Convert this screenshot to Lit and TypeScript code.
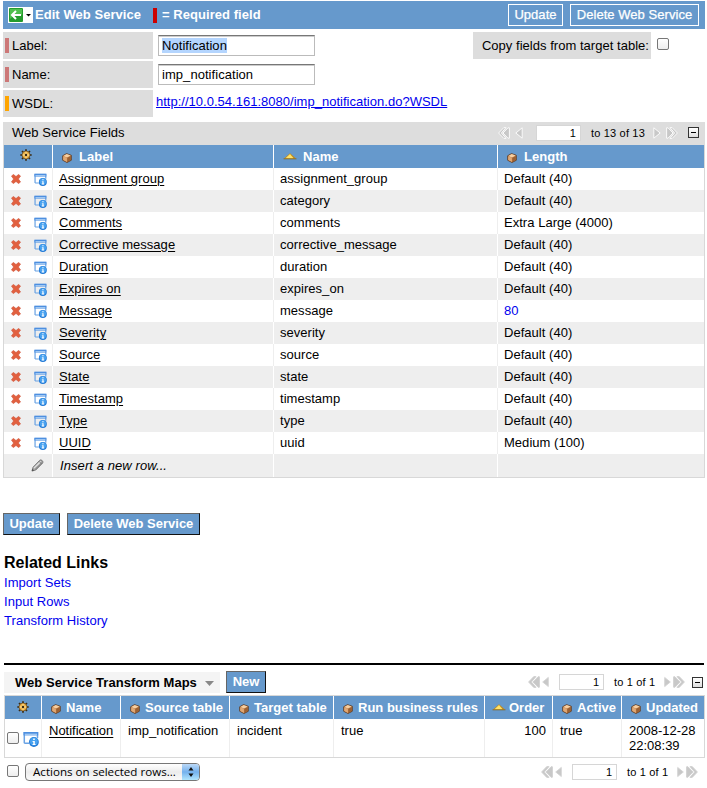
import { LitElement, html, css } from "lit";
import { customElement, property } from "lit/decorators.js";

const base = css`
  * { box-sizing: border-box; }
  :host { display: block; font: 13px/16px "Liberation Sans", Arial, sans-serif; color: #000; }
  svg { display: block; flex: none; }
`;

const cube = html`<svg class="cube" width="10" height="10" viewBox="0 0 11 11">
  <path d="M.8 3 5 .7 10.2 2.5V8L5.5 10.4 .8 8Z" fill="#b97a43" stroke="#5a3418" stroke-width=".9"/>
  <path d="M1.3 3.2 5.2 1.1 9.6 2.8 5.6 4.9Z" fill="#f6cfa2"/>
  <path d="M1.3 3.6 5.4 5.2V9.9L1.3 7.8Z" fill="#e0a874"/>
  <path d="M5.9 5.2 9.7 3.5V7.8L5.9 9.9Z" fill="#9a6033"/></svg>`;

const sortUp = html`<svg class="sort" width="14" height="7" viewBox="0 0 14 7">
  <path d="M.5 6 7 .3 13.5 6Z" fill="#c08a1c"/><path d="M2.5 5.2 7 1 10.5 5.2Z" fill="#ffe36a"/><path d="M.5 5.5H13.5V6.3H.5Z" fill="#7d6a35"/></svg>`;

const gear = html`<svg class="gear" width="12" height="12" viewBox="0 0 12 12">
  <path d="M6 .3V11.7M.3 6H11.7M2 2 10 10M10 2 2 10" stroke="#3a2a12" stroke-width="1.7"/>
  <circle cx="6" cy="6" r="3.9" fill="#f0b548" stroke="#5a3c14" stroke-width=".7"/>
  <path d="M6 2.6V9.4M2.6 6H9.4" stroke="#fde29a" stroke-width="1"/>
  <circle cx="6" cy="6" r="1.2" fill="#3a2a12"/></svg>`;

const cross = html`<svg class="cross" width="10" height="10" viewBox="0 0 10 10">
  <path d="M.5 2 2.5.5 5 2.6 7.5.5 9.5 2 7.4 5 9.5 8 7.5 9.5 5 7.4 2.5 9.5.5 8 2.6 5Z" fill="#e2603f" stroke="#d15a40" stroke-width=".7"/></svg>`;

const info = (s: number) => html`<svg width=${s} height=${s} viewBox="0 0 16 16">
  <path d="M1.3 12.3V1.8H14.5V7M1.3 12.3H6" fill="none" stroke="#6ba3e4" stroke-width="1.5"/>
  <path d="M.5 1H15.2V4.4H.5Z" fill="#4d8fe0"/><path d="M1.8 2.7H14V3.8H1.8Z" fill="#b5d6f8"/>
  <circle cx="10.9" cy="11" r="4.9" fill="#1f78d6"/><circle cx="10.9" cy="10.5" r="3.9" fill="#48a2f0"/>
  <path d="M10.2 7.6H11.8V9H10.2ZM9.6 10H11.8V13H12.5V14H9.5V13H10.3V10.9H9.6Z" fill="#fff"/></svg>`;

const pencil = html`<svg width="13" height="13" viewBox="0 0 13 13">
  <path d="M1 12 2 8.2 8.6 1.4Q9.8.2 11.2 1.6 12.7 3 11.6 4.2L4.8 11Z" fill="#aaa" stroke="#777" stroke-width=".9"/>
  <path d="M3 9.2 9.8 2.5" stroke="#e4e4e4" stroke-width="1.1"/><path d="M4.4 10.2 11 3.7M8 2.3 10.7 5" stroke="#777" stroke-width=".9"/><path d="M.7 12.3 1.4 9.8 3.2 11.6Z" fill="#555"/></svg>`;

@customElement("page-control")
class PageControl extends LitElement {
  @property() range = "";
  @property({ type: Boolean, reflect: true }) light = false;
  @property({ type: Boolean }) collapse = false;
  static styles = [base, css`
    :host { display: flex; align-items: center; height: 18px; font-size: 11px; line-height: 14px; }
    .arrows { display: flex; gap: 5px; --fill: #c8c8c8; --edge: #fafafa; }
    :host([light]) .arrows { gap: 2px; --fill: #c8c8c8; --edge: #d2d2d2; }
    .arrows path { fill: var(--fill); stroke: var(--edge); stroke-width: 1; }
    .flip { transform: scaleX(-1); }
    .num { width: 45px; height: 16px; border: 1px solid #d6d6d6; background: #fff; text-align: right; padding-right: 4px; margin: 0 10px 0 13px; }
    :host([light]) .num { margin-left: 10px; }
    .range { width: 54px; margin-right: 8px; white-space: nowrap; letter-spacing: .18px; }
    :host([light]) .range { width: 42px; }
    .box { width: 11px; height: 11px; border: 1px solid #333; background: linear-gradient(#fff, #ddd); margin-left: 10px; display: grid; place-items: center; }
    :host([light]) .box { margin-left: 7px; }
    .dash { width: 5px; height: 1px; background: #000; }
  `];
  render() {
    const one = (c: string) => html`<svg class=${c} width=${this.light ? 7 : 8} height="12" viewBox="0 0 8 12"><path d="M.8 .8 7.2 6 .8 11.2Z"/></svg>`;
    const two = (c: string) => html`<svg class=${c} width="12" height="12" viewBox="0 0 12 12"><path d="M4 .6H6.2L11.4 6 6.2 11.4H4L8.6 6Z"/><path d="M.6 .8H2L7 6 2 11.2H.6Z"/></svg>`;
    return html`<div class="arrows">${two("flip")}${one("flip")}</div>
      <div class="num">1</div><div class="range">${this.range}</div>
      <div class="arrows">${one("")}${two("")}</div>
      ${this.collapse ? html`<div class="box"><div class="dash"></div></div>` : ""}`;
  }
}

const fields: [string, string, string][] = [
  ["Assignment group", "assignment_group", "Default (40)"],
  ["Category", "category", "Default (40)"],
  ["Comments", "comments", "Extra Large (4000)"],
  ["Corrective message", "corrective_message", "Default (40)"],
  ["Duration", "duration", "Default (40)"],
  ["Expires on", "expires_on", "Default (40)"],
  ["Message", "message", "80"],
  ["Severity", "severity", "Default (40)"],
  ["Source", "source", "Default (40)"],
  ["State", "state", "Default (40)"],
  ["Timestamp", "timestamp", "Default (40)"],
  ["Type", "type", "Default (40)"],
  ["UUID", "uuid", "Medium (100)"],
];

@customElement("app-root")
class AppRoot extends LitElement {
  static styles = [base, css`
    :host { height: 788px; background: #fff; padding: 1px 2px 0 3px; overflow: hidden; white-space: nowrap; }
    .bar { height: 28px; background: #69c; color: #fff; font-weight: bold; display: flex; align-items: center; padding: 0 6px 0 5px; letter-spacing: .05px; }
    .back { width: 25px; height: 16px; background: #fff; margin-right: 2px; }
    .req { width: 4px; height: 15px; background: #c00; margin: 0 5px 0 12px; }
    .title { width: 106px; }
    .btn { height: 22px; border: 1px solid #fff; font-weight: normal; display: grid; place-items: center; letter-spacing: .05px; -webkit-text-stroke: .25px #fff; }
    .first { width: 55px; margin-left: auto; margin-right: 7px; }
    .second { width: 129px; }
    .form { display: grid; grid-template-columns: 150px 1fr 178px 54px; grid-auto-rows: 27px; row-gap: 2px; margin-top: 3px; }
    .lab { background: #ddd; display: flex; align-items: center; padding-left: 2px; }
    .mark { width: 4px; height: 15px; background: #c77; margin-right: 3px; }
    .warn { background: orange; }
    .field { padding: 3px 0 0 5px; }
    .input { width: 157px; height: 21px; border: 1px solid #bbb; border-top: 1px solid #777; box-shadow: inset 0 1px #ccc; padding: 2px 3px; letter-spacing: .05px; }
    .sel { background: #b4d5fe; }
    .wsdl { color: #00e; text-decoration: underline; padding: 4px 0 0 3px; letter-spacing: .015px; }
    .copy { background: #ddd; display: flex; align-items: center; justify-content: flex-end; padding-right: 2px; letter-spacing: .03px; }
    .check { width: 12px; height: 12px; border: 1px solid #777; border-radius: 2px; background: linear-gradient(#fff, #eee); flex: none; }
    .form .check { margin: 6px 0 0 6px; }
    .list { width: 702px; margin-top: 5px; border: 1px solid #d8d8d8; border-width: 0 1px 1px; }
    .caption { height: 23px; background: #ddd; margin: 0 -1px; padding: 0 0 2px 9px; display: flex; align-items: center; letter-spacing: .05px; }
    .caption page-control { margin-left: auto; margin-right: 6px; }
    .row { display: grid; grid-template-columns: 49px 221px 224px 1fr; height: 22px; background: #fff; letter-spacing: .03px; }
    .row.alt { background: #eee; }
    .row > * { border-right: 1px solid #eee; display: flex; align-items: center; padding-left: 6px; }
    .row.alt > * { border-color: #fff; }
    .row > :last-child, .thead > :last-child { border-right: 0; }
    .row > .icons { padding: 0 0 0 7px; gap: 13px; }
    .cross { margin-top: -1px; }
    .row.insert { height: 23px; font-style: italic; letter-spacing: .08px; }
    .row.insert .icons { padding: 0 0 0 27px; }
    .row.insert .txt { padding-left: 7px; }
    .link { text-decoration: underline; text-underline-offset: 2px; }
    .blue { color: #00e; }
    .row.head, .thead { height: 23px; background: #69c; color: #fff; font-weight: bold; }
    .row.head > * { border-color: #fff; padding-left: 9px; gap: 7px; }
    .row.head .gear { margin: -3px 0 0 7px; }
    .row.head .sort { margin-right: -1px; }
    .cube { margin-top: 3px; }
    .buttons { display: flex; gap: 7px; margin-top: 35px; }
    .dark { height: 22px; background: #69c; color: #fff; font-weight: bold; border: 1px solid; border-color: #666 #111 #111 #666; display: grid; place-items: center; }
    .w1 { width: 57px; } .w2 { width: 133px; } .w3 { width: 40px; }
    .related { font-size: 16px; font-weight: bold; line-height: 20px; margin: 18px 0 0 1px; }
    .links { color: #00e; line-height: 19px; margin: 0 0 0 1px; letter-spacing: .05px; }
    .rule { height: 2px; background: #000; margin: 33px 1px 6px; }
    .tabs { display: flex; align-items: center; height: 22px; padding-left: 1px; }
    .tab { width: 216px; height: 21px; background: #f4f4f4; display: flex; align-items: center; padding: 2px 0 0 11px; font-weight: bold; margin-right: 6px; gap: 8px; letter-spacing: .03px; }
    .tabs page-control { margin-left: auto; margin-right: 2px; }
    .maps { width: 701px; margin: 2px 0 0 1px; border: 1px solid #d8d8d8; }
    .thead, .tr { display: grid; grid-template-columns: 37px 79px 109px 104px 151px 68px 69px 1fr; }
    .thead > * { border-right: 1px solid #fff; display: flex; align-items: center; gap: 5px; padding-left: 9px; }
    .thead .sort { margin: 0 -2px 0 -2px; }
    .thead .gear { margin: -2px 0 0 3px; }
    .tr { height: 38px; line-height: 15px; }
    .tr > * { border-right: 1px solid #eee; padding: 4px 6px 0 7px; }
    .tr > :last-child { border: 0; }
    .tr > .pick { display: flex; align-items: center; gap: 4px; padding: 0 0 1px 2px; }
    .pick svg { margin-top: 2px; }
    .right { text-align: right; }
    .foot { display: flex; align-items: center; height: 18px; margin-top: 5px; padding-left: 4px; }
    .foot .check { margin-top: -2px; }
    .foot page-control { margin-left: auto; margin-right: 7px; }
    .select { width: 175px; height: 18px; border: 1px solid #777; border-radius: 4px; margin-left: 6px; background: linear-gradient(#fff, #ececec 50%, #f9f9f9); display: flex; align-items: center; font: 11.6px/14px "Open Sans", sans-serif; padding-left: 7px; overflow: hidden; }
    .step { margin-left: auto; width: 17px; height: 18px; background: linear-gradient(#c4ddf8, #74b1ed 50%, #b8ecff); display: grid; place-items: center; }
  `];
  render() {
    const h = (icon: unknown, t: string) => html`<div>${icon}<span>${t}</span></div>`;
    return html`
      <div class="bar">
        <svg class="back" viewBox="0 0 25 16"><rect x="1" y="1" width="14" height="14" rx="1" fill="#249b2e"/><path d="M2 2H14V8Q8 6 2 12Z" fill="#4fbf4e"/><path d="M13 8H4M8 4 4 8 8 12" fill="none" stroke="#fff" stroke-width="2"/><path d="M18 7H23L20.5 9.5Z" fill="#000"/></svg>
        <span class="title">Edit Web Service</span><div class="req"></div><span class="reqt">= Required field</span>
        <div class="btn first"><span>Update</span></div><div class="btn second"><span>Delete Web Service</span></div>
      </div>
      <div class="form">
        <div class="lab"><div class="mark"></div>Label:</div><div class="field"><div class="input"><span class="sel">Notification</span></div></div>
        <div class="copy"><span>Copy fields from target table:</span></div><div class="check"></div>
        <div class="lab"><div class="mark"></div>Name:</div><div class="field"><div class="input">imp_notification</div></div><div></div><div></div>
        <div class="lab"><div class="mark warn"></div>WSDL:</div><div class="wsdl"><span>http://10.0.54.161:8080/imp_notification.do?WSDL</span></div>
      </div>
      <div class="list">
        <div class="caption"><span>Web Service Fields</span><page-control range="to 13 of 13" collapse></page-control></div>
        <div class="row head"><div>${gear}</div>${h(cube, "Label")}${h(sortUp, "Name")}${h(cube, "Length")}</div>
        ${fields.map(([a, b, c], i) => html`<div class="row ${i % 2 ? "alt" : ""}"><div class="icons">${cross}${info(13)}</div><div><span class="link">${a}</span></div><div>${b}</div><div class=${c === "80" ? "blue" : ""}>${c}</div></div>`)}
        <div class="row alt insert"><div class="icons">${pencil}</div><div class="txt">Insert a new row...</div><div></div><div></div></div>
      </div>
      <div class="buttons"><div class="dark w1"><span>Update</span></div><div class="dark w2"><span>Delete Web Service</span></div></div>
      <div class="related">Related Links</div>
      <div class="links"><div>Import Sets</div><div>Input Rows</div><div>Transform History</div></div>
      <div class="rule"></div>
      <div class="tabs"><div class="tab"><span>Web Service Transform Maps</span><svg width="9" height="5" viewBox="0 0 9 5"><path d="M0 0H9L4.5 5Z" fill="#888"/></svg></div>
        <div class="dark w3"><span>New</span></div><page-control light range="to 1 of 1" collapse></page-control></div>
      <div class="maps">
        <div class="thead"><div>${gear}</div>${h(cube, "Name")}${h(cube, "Source table")}${h(cube, "Target table")}${h(cube, "Run business rules")}${h(sortUp, "Order")}${h(cube, "Active")}${h(cube, "Updated")}</div>
        <div class="tr"><div class="pick"><div class="check"></div>${info(16)}</div><div><span class="link">Notification</span></div><div>imp_notification</div><div>incident</div><div>true</div><div class="right">100</div><div>true</div><div>2008-12-28<br>22:08:39</div></div>
      </div>
      <div class="foot"><div class="check"></div><div class="select"><span>Actions on selected rows...</span><div class="step"><svg width="6" height="10" viewBox="0 0 6 10"><path d="M3 0 5.5 3.5H.5ZM3 10 5.5 6.5H.5Z" fill="#111"/></svg></div></div><page-control light range="to 1 of 1"></page-control></div>
    `;
  }
}
